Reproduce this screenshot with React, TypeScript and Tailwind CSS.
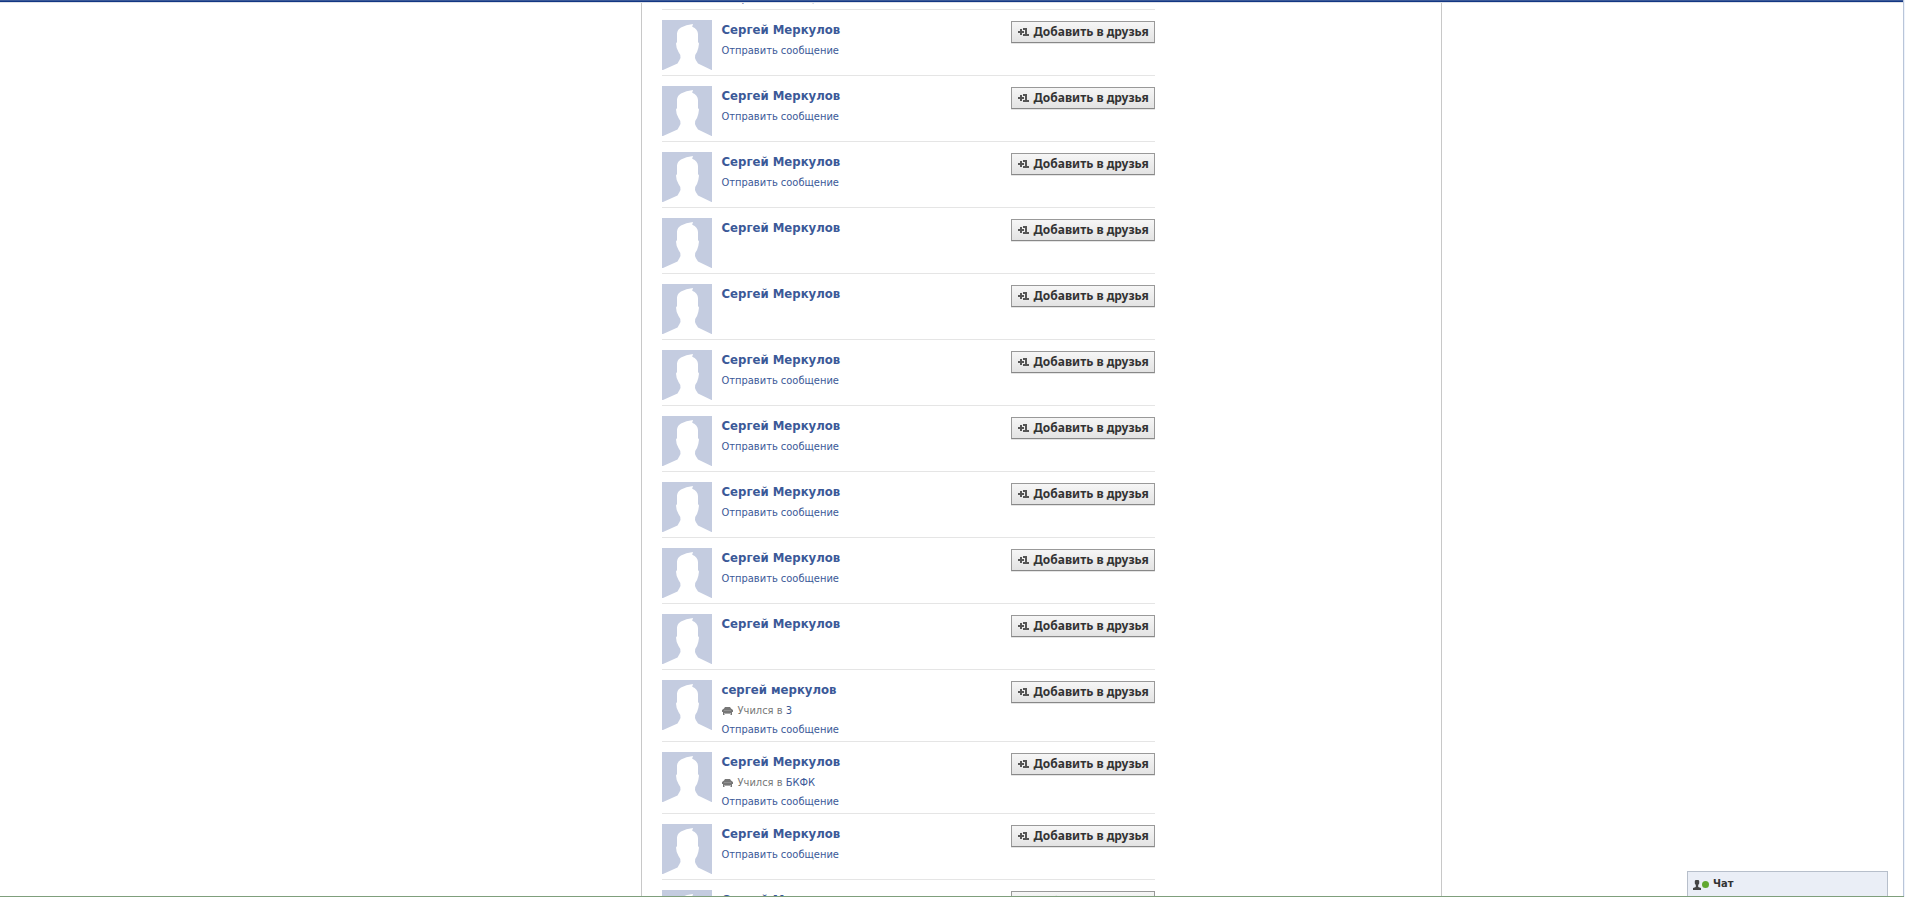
type Person = { name: string; school?: string; message?: boolean };

const full = 'Сергей Меркулов';

const people: Person[] = [
  { name: full, message: true },
  { name: full, message: true },
  { name: full, message: true },
  { name: full },
  { name: full },
  { name: full, message: true },
  { name: full, message: true },
  { name: full, message: true },
  { name: full, message: true },
  { name: full },
  { name: 'сергей меркулов', school: '3', message: true },
  { name: full, school: 'БКФК', message: true },
  { name: full, message: true },
  { name: full, message: true },
];

function Avatar() {
  return (
    <svg viewBox="0 0 50 50" className="size-[50px] shrink-0 bg-[#c4cce0]" aria-hidden="true">
      <path
        fill="#fff"
        d="M1 50 L15.500 43.500 L17.500 40 L18.500 38 L18.300 35 L16.500 32 L14.700 28 L14 23.500 L15 22 L15 13.500 Q15.300 9.500 19 7.500 Q24 4.500 31 4 L30.200 6.700 Q35.800 9 36 14 L36 22 L37 23.500 L36.300 28 L35 32 L33.200 35 L33 38 L33.800 40 L36 43.500 L49.500 50 Z"
      />
    </svg>
  );
}

function SchoolIcon() {
  return (
    <svg viewBox="0 0 11 8" className="h-2 w-[11px] shrink-0" aria-hidden="true">
      <path
        fill="#777"
        d="M3 0H8L9 1.500L11 3V5H10V8H8.500V6H2.500V8H1V5H0V3L2 1.500Z"
      />
      <path fill="#aaa" d="M3 6H8V7H3ZM2 3H9V3.500H2Z" />
    </svg>
  );
}

function AddFriend() {
  return (
    <button
      type="button"
      className="mt-px flex h-[22px] w-36 shrink-0 items-center gap-[5px] border border-[#999] border-b-[#888] bg-linear-to-b from-[#f6f6f6] to-[#e3e3e3] pl-1.5 font-['Noto_Sans',sans-serif] text-[12px] font-bold whitespace-nowrap text-[#333] shadow-[0_1px_0_rgba(0,0,0,0.1)]"
    >
      <svg viewBox="0 0 11 8" className="h-2 w-[11px] shrink-0" fill="#555" aria-hidden="true">
        <path d="M2 1H4V3H6V5H4V7H2V5H0V3H2ZM5 0H9V6H11V8H5V6H7V2H5Z" />
      </svg>
      Добавить в друзья
    </button>
  );
}

function MessageLink() {
  return (
    <a href="#message" className="leading-[19px]">
      Отправить сообщение
    </a>
  );
}

function Row({ person }: { person: Person }) {
  return (
    <li className="flex min-h-[66px] items-start border-t border-[#e5e5e5] pt-2.5 pb-0.5">
      <Avatar />
      <div className="ml-2.5 flex min-w-0 flex-1 flex-col items-start text-[11px] text-[#3b5998]">
        <a href="#profile" className="mb-px text-[13px] leading-5 font-bold">
          {person.name}
        </a>
        {person.school && (
          <p className="flex items-center leading-[19px] text-[#777]">
            <SchoolIcon />
            <span className="ml-[5px]">
              Учился в{' '}
              <a href="#school" className="text-[#3b5998]">
                {person.school}
              </a>
            </span>
          </p>
        )}
        {person.message && <MessageLink />}
      </div>
      <AddFriend />
    </li>
  );
}

export default function App() {
  return (
    <div className="relative h-screen overflow-hidden border-r border-[#eef3fb] bg-white font-['DejaVu_Sans_Condensed','DejaVu_Sans',sans-serif]">
      <header className="absolute inset-x-0 top-0 z-10 mr-px h-[3px] border-b border-[#dfe1e8] bg-linear-to-b from-[#3b5998] from-50% to-[#133783] to-50%" />
      <div className="flex h-full justify-center border-r border-[#b9c5d9] pr-px">
        <div className="flex w-[981px]">
          <main className="ml-auto w-[801px] border-x border-[#c8c8c8] pl-5">
            <ul className="w-[493px]">
              <li className="flex h-[9px] items-end pb-px pl-[60px] text-[11px] text-[#3b5998]">
                <MessageLink />
              </li>
              {people.map((person, i) => (
                <Row key={i} person={person} />
              ))}
            </ul>
          </main>
        </div>
      </div>
      <button
        type="button"
        className="absolute right-4 bottom-0 flex h-[26px] w-[201px] items-center border border-b-0 border-[#b7bfcb] bg-[#eaeef6] pl-[5px] text-[11px] font-bold text-[#333]"
      >
        <svg viewBox="0 0 16 10" className="mr-1 h-2.5 w-4" aria-hidden="true">
          <path fill="#444" d="M2.500 0H5.500L6.200 1V3.500L5.200 5V7L8 8V10H0V8L2.800 7V5L1.800 3.500V1Z" />
          <circle cx="12.500" cy="4.500" r="3.500" fill="#62a831" />
        </svg>
        Чат
      </button>
      <div className="absolute inset-x-0 bottom-0 h-px bg-[#7f9f7c]" />
    </div>
  );
}
